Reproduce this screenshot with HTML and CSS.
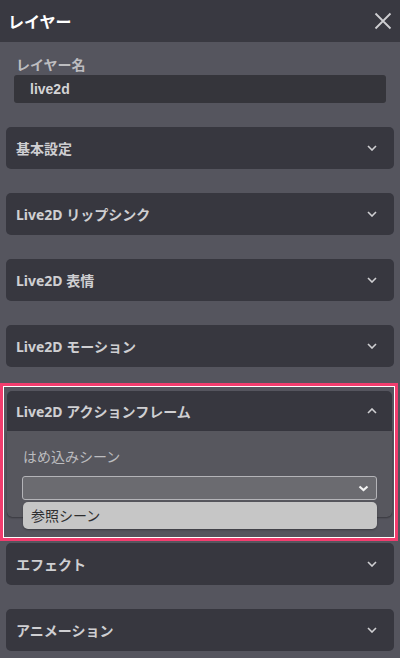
FILE: index.html
```html
<!DOCTYPE html>
<html lang="ja">
<head>
    <meta charset="UTF-8">
    <title>レイヤー</title>
    <link rel="stylesheet" href="styles.css">
</head>
<body>
<div class="panel">
    <div class="top">
        <span class="top-title">レイヤー</span>
        <svg class="close" width="18" height="18" viewBox="0 0 18 18"><path d="M1.5 1.5 L16.5 16.5 M16.5 1.5 L1.5 16.5" stroke="#cfcfd2" stroke-width="1.8" fill="none"/></svg>
    </div>
    <div class="content">
        <div class="field">
            <div class="field-label">レイヤー名</div>
            <div class="field-input">live2d</div>
        </div>

        <div class="card">
            <div class="card-head"><span>基本設定</span><svg class="chev" width="10" height="6" viewBox="0 0 10 6"><path d="M1 1 L5 5 L9 1" stroke="#cfcfd2" stroke-width="1.6" fill="none"/></svg></div>
        </div>
        <div class="card">
            <div class="card-head"><span>Live2D リップシンク</span><svg class="chev" width="10" height="6" viewBox="0 0 10 6"><path d="M1 1 L5 5 L9 1" stroke="#cfcfd2" stroke-width="1.6" fill="none"/></svg></div>
        </div>
        <div class="card">
            <div class="card-head"><span>Live2D 表情</span><svg class="chev" width="10" height="6" viewBox="0 0 10 6"><path d="M1 1 L5 5 L9 1" stroke="#cfcfd2" stroke-width="1.6" fill="none"/></svg></div>
        </div>
        <div class="card">
            <div class="card-head"><span>Live2D モーション</span><svg class="chev" width="10" height="6" viewBox="0 0 10 6"><path d="M1 1 L5 5 L9 1" stroke="#cfcfd2" stroke-width="1.6" fill="none"/></svg></div>
        </div>

        <div class="card open">
            <div class="card-head"><span>Live2D アクションフレーム</span><svg class="chev" width="10" height="6" viewBox="0 0 10 6"><path d="M1 5 L5 1 L9 5" stroke="#cfcfd2" stroke-width="1.6" fill="none"/></svg></div>
            <div class="card-body">
                <div class="sub-label">はめ込みシーン</div>
                <div class="select">
                    <svg class="select-chev" width="11" height="7" viewBox="0 0 11 7"><path d="M1.5 1.5 L5.5 5 L9.5 1.5" stroke="#f2f2f2" stroke-width="2.2" fill="none"/></svg>
                </div>
                <div class="menu">参照シーン</div>
            </div>
            <div class="mark"></div>
        </div>

        <div class="card">
            <div class="card-head"><span>エフェクト</span><svg class="chev" width="10" height="6" viewBox="0 0 10 6"><path d="M1 1 L5 5 L9 1" stroke="#cfcfd2" stroke-width="1.6" fill="none"/></svg></div>
        </div>
        <div class="card">
            <div class="card-head"><span>アニメーション</span><svg class="chev" width="10" height="6" viewBox="0 0 10 6"><path d="M1 1 L5 5 L9 1" stroke="#cfcfd2" stroke-width="1.6" fill="none"/></svg></div>
        </div>
    </div>
</div>
</body>
</html>
```

FILE: styles.css
```css
body{margin: 0;padding: 0;background: #55555e;
    font-family: "Noto Sans", "Noto Sans CJK JP", sans-serif;
}
.panel{width: 400px;height: 658px;overflow: hidden;background: #55555e;}
.top{
    height: 42px;
    background: #393941;
    display: flex;
    align-items: center;
    justify-content: space-between;
    padding: 0 8px;
}
.top-title{color: #fff;font-size: 16px;font-weight: bold;}
.content{padding: 14px 6px 0;}

.field{padding: 0 8px;margin-bottom: 24px;}
.field-label{
    color: #bdbdc0;
    font-size: 14px;
    font-weight: bold;
    line-height: 18px;
    padding-left: 2px;
    margin-bottom: 1px;
}
.field-input{
    height: 28px;
    line-height: 28px;
    background: #35353b;
    border-radius: 3px;
    color: #d4d4d6;
    font-family: "Liberation Sans", "Noto Sans CJK JP", sans-serif;
    font-size: 14px;
    font-weight: bold;
    padding-left: 16px;
}

.card{
    background: #37373f;
    border-radius: 5px;
    margin-bottom: 24px;
    position: relative;
}
.card-head{
    height: 42px;
    display: flex;
    align-items: center;
    justify-content: space-between;
    padding: 0 17px 0 10px;
    color: #cfcfd2;
    font-size: 14px;
    font-weight: bold;
}
.open{margin: 0 2px 26px 1px;}
.open .card-head{height: 40px;padding-left: 9px;padding-right: 15px;}
.card-body{
    background: #57575e;
    border-radius: 0 0 5px 5px;
    height: 86px;
    padding: 0 15px;
    position: relative;
    box-shadow: 0 1px 2px rgba(0,0,0,0.35);
}
.sub-label{
    color: #bcbcbf;
    font-size: 14px;
    line-height: 20px;
    padding: 16px 0 0 1px;
    margin-bottom: 9px;
}
.select{
    height: 22px;
    background: #6b6b70;
    border: 1px solid #b4b4b8;
    border-radius: 3px;
    display: flex;
    align-items: center;
    justify-content: flex-end;
    padding-right: 7px;
}
.menu{
    position: absolute;
    left: 16px;
    right: 15px;
    top: 71px;
    height: 27px;
    line-height: 27px;
    background: #c6c6c6;
    border-radius: 5px;
    color: #2e2e30;
    font-size: 14px;
    padding-left: 8px;
    box-shadow: 0 1px 2px rgba(0,0,0,0.3);
}
.mark{
    position: absolute;
    left: -7px;
    top: -8px;
    width: 392px;
    height: 152px;
    border: 3px solid #f23d6e;
    box-shadow: inset 0 0 0 1px #fff;
}
```
